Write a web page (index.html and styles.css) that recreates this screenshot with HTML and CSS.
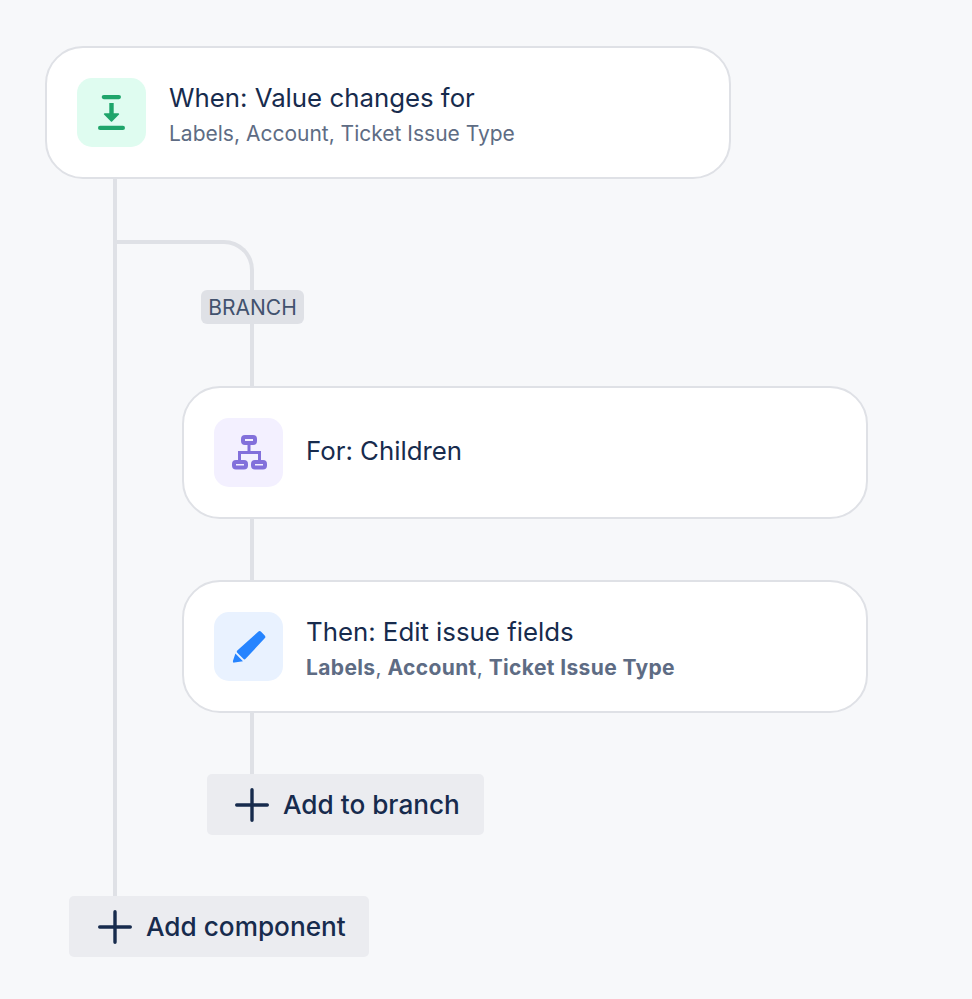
FILE: index.html
```html
<!DOCTYPE html>
<html lang="en">
<head>
  <meta charset="UTF-8" />
  <meta name="viewport" content="width=device-width, initial-scale=1" />
  <title>Automation rule</title>
  <link rel="stylesheet" href="styles.css">
</head>
<body>
  <div class="card">
    <span class="card-icon icon-green">
      <svg viewBox="0 0 69 69" width="69" height="69" fill="#1FA56B">
        <rect x="24.7" y="17" width="19.3" height="4.2" rx="2.1" />
        <rect x="21" y="47.8" width="27" height="4.2" rx="2.1" />
        <rect x="32.3" y="25" width="4.4" height="12" />
        <path d="M27.6 35.2h13.8a.8.8 0 0 1 .6 1.3l-6.9 7a.9.9 0 0 1-1.2 0l-6.9-7a.8.8 0 0 1 .6-1.3z" />
      </svg>
    </span>
    <div class="card-text two-lines">
      <div class="card-title">When: Value changes for</div>
      <div class="card-sub">Labels, Account, Ticket Issue Type</div>
    </div>
  </div>

  <div class="rail">
    <div class="elbow"></div>
    <div class="tag">BRANCH</div>
    <div class="stem stem-tall"></div>

    <div class="card card-branch">
      <span class="card-icon icon-purple">
        <svg viewBox="0 0 69 69" width="69" height="69" fill="none" stroke="#8270DB" stroke-width="3">
          <rect x="29" y="19" width="12" height="6" rx="2" stroke-width="4" />
          <rect x="20" y="44" width="12" height="5.5" rx="2" stroke-width="4" />
          <rect x="39" y="44" width="12" height="5.5" rx="2" stroke-width="4" />
          <path d="M35 27v7.5M25.5 42v-7.5h20V42" />
        </svg>
      </span>
      <div class="card-text one-line">
        <div class="card-title">For: Children</div>
      </div>
    </div>
    <div class="stem"></div>

    <div class="card card-branch">
      <span class="card-icon icon-blue">
        <svg viewBox="0 0 69 69" width="69" height="69" fill="#2684FF">
          <path d="M44.2 19.8a2 2 0 0 1 2.9 0l3.6 3.7a2 2 0 0 1 0 2.8L31.6 46.8a1.6 1.6 0 0 1-2.3 0l-6-6a1.6 1.6 0 0 1 0-2.2z" />
          <path d="M21.4 41.6l7.6 7.6-8.6 1.4a1.3 1.3 0 0 1-1.5-1.5z" />
        </svg>
      </span>
      <div class="card-text two-lines">
        <div class="card-title">Then: Edit issue fields</div>
        <div class="card-sub"><b>Labels</b>, <b>Account</b>, <b>Ticket Issue Type</b></div>
      </div>
    </div>
    <div class="stem"></div>

    <button class="add-btn add-to-branch">
      <svg viewBox="0 0 34 34" width="34" height="34" stroke="#172B4D" stroke-width="3.4" stroke-linecap="round">
        <path d="M17 1.7v30.6M1.7 17h30.6" />
      </svg>
      Add to branch
    </button>
  </div>

  <button class="add-btn add-component">
    <svg viewBox="0 0 34 34" width="34" height="34" stroke="#172B4D" stroke-width="3.4" stroke-linecap="round">
      <path d="M17 1.7v30.6M1.7 17h30.6" />
    </svg>
    Add component
  </button>
</body>
</html>
```

FILE: styles.css
```css
/* Base */
* {
  box-sizing: border-box;
}
body {
  margin: 0;
  padding: 46px 0 0 45px;
  min-height: 100vh;
  background: #f7f8fa;
  color: #172b4d;
  font-family: Inter, "Liberation Sans", sans-serif;
}

/* Cards */
.card {
  display: flex;
  align-items: center;
  gap: 23px;
  width: 686px;
  height: 133px;
  padding: 0 30px;
  background: #fff;
  border: 2px solid #dfe1e6;
  border-radius: 38px;
}
.card-branch {
  margin-left: 65px;
}
.card-icon {
  flex: none;
  display: block;
  width: 69px;
  height: 69px;
  border-radius: 15px;
}
.card-icon svg {
  display: block;
}
.icon-green {
  background: #dffcf0;
}
.icon-purple {
  background: #f3f0ff;
}
.icon-blue {
  background: #e9f2ff;
}
.one-line {
  padding-bottom: 4px;
}
.two-lines {
  padding-top: 3px;
}
.card-title {
  font-size: 25.8px;
  line-height: 34px;
}
.card-sub {
  margin-top: 6px;
  font-size: 21px;
  line-height: 26px;
  color: #5e6c84;
}
.card-sub b {
  font-weight: 700;
  letter-spacing: 0.37px;
}

/* Connectors */
.rail {
  margin-left: 68px;
  height: 717px;
  padding-top: 61px;
  border-left: 4px solid #dfe1e6;
}
.elbow {
  width: 137px;
  height: 50px;
  border-top: 4px solid #dfe1e6;
  border-right: 4px solid #dfe1e6;
  border-top-right-radius: 30px;
}
.stem {
  width: 4px;
  height: 61px;
  margin-left: 133px;
  background: #dfe1e6;
}
.stem-tall {
  height: 62px;
}
.tag {
  width: 103px;
  height: 34px;
  margin-left: 84px;
  border-radius: 6px;
  background: #dfe1e6;
  color: #42526e;
  font-size: 21px;
  line-height: 35px;
  text-align: center;
}

/* Buttons */
.add-btn {
  display: flex;
  align-items: center;
  gap: 14px;
  height: 61px;
  border: none;
  border-radius: 5px;
  background: #ebecf0;
  color: #172b4d;
  font-family: inherit;
  font-size: 26.2px;
  font-weight: 500;
  cursor: pointer;
}
.add-to-branch {
  width: 277px;
  margin-left: 90px;
  padding: 0 0 0 28px;
}
.add-component {
  width: 300px;
  margin-left: 24px;
  padding: 0 0 0 29px;
}
```
